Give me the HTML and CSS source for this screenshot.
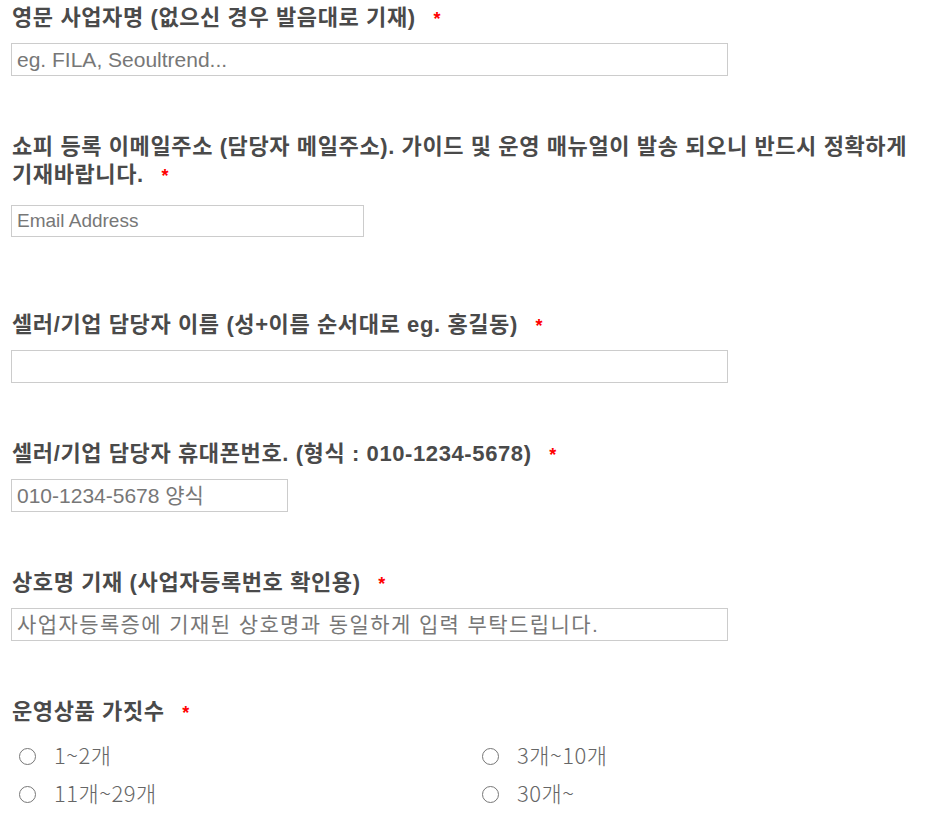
FILE: index.html
```html
<!DOCTYPE html>
<html lang="ko">
<head>
<meta charset="UTF-8">
<meta name="viewport" content="width=device-width, initial-scale=1.0">
<title>셀러 등록</title>
<link rel="stylesheet" href="styles.css">
</head>
<body>
    <form class="form">
        <div class="field">
            <label class="field-label">영문 사업자명 (없으신 경우 발음대로 기재) <span class="req">*</span></label>
            <input class="input input-full" type="text" placeholder="eg. FILA, Seoultrend...">
        </div>

        <div class="field field-gap">
            <label class="field-label field-label-wrap">쇼피 등록 이메일주소 (담당자 메일주소). 가이드 및 운영 매뉴얼이 발송 되오니 반드시 정확하게 기재바랍니다. <span class="req">*</span></label>
            <input class="input input-email" type="email" placeholder="Email Address">
        </div>

        <div class="field">
            <label class="field-label">셀러/기업 담당자 이름 (성+이름 순서대로 eg. 홍길동) <span class="req">*</span></label>
            <input class="input input-full" type="text">
        </div>

        <div class="field">
            <label class="field-label">셀러/기업 담당자 휴대폰번호. (형식 : 010-1234-5678) <span class="req">*</span></label>
            <input class="input input-phone" type="text" placeholder="010-1234-5678 양식">
        </div>

        <div class="field">
            <label class="field-label">상호명 기재 (사업자등록번호 확인용) <span class="req">*</span></label>
            <input class="input input-full input-ko" type="text" placeholder="사업자등록증에 기재된 상호명과 동일하게 입력 부탁드립니다.">
        </div>

        <div class="field">
            <label class="field-label">운영상품 가짓수 <span class="req">*</span></label>
            <div class="radio-list">
                <label class="radio"><input type="radio" name="count"><span>1~2개</span></label>
                <label class="radio"><input type="radio" name="count"><span>3개~10개</span></label>
                <label class="radio"><input type="radio" name="count"><span>11개~29개</span></label>
                <label class="radio"><input type="radio" name="count"><span>30개~</span></label>
            </div>
        </div>
    </form>
</body>
</html>
```

FILE: styles.css
```css
body {
    margin: 0;
    padding: 4px 11px 0;
    background: #fff;
    font-family: "Liberation Sans", "Noto Sans CJK KR", sans-serif;
    color: #4a4a4a;
}
.field {
    margin-bottom: 57px;
}
.field-gap {
    margin-bottom: 74px;
}
.field-label {
    display: block;
    font-size: 22px;
    font-weight: 700;
    line-height: 28px;
    letter-spacing: 0.6px;
    margin-bottom: 11px;
    padding-left: 1px;
}
.field-label-wrap {
    margin-bottom: 16px;
}
.req {
    display: inline-block;
    color: #f00;
    font-size: 18px;
    line-height: 1;
    margin-left: 11px;
}
.input {
    display: block;
    box-sizing: border-box;
    height: 33px;
    margin: 0;
    padding: 0 5px;
    border: 1px solid #ccc;
    border-radius: 0;
    font-family: "Liberation Sans", "Noto Sans CJK KR", sans-serif;
    font-size: 21px;
    color: #333;
    background: #fff;
}
.input::placeholder {
    color: #777;
}
.input-full {
    width: 717px;
}
.input-email {
    width: 353px;
    height: 32px;
    font-size: 19px;
}
.input-phone {
    width: 277px;
}
.input-ko {
    letter-spacing: 1.4px;
}
.radio-list {
    display: grid;
    grid-template-columns: 463px 1fr;
    padding-left: 8px;
    margin-top: 7px;
    row-gap: 4px;
}
.radio {
    display: flex;
    align-items: center;
    height: 34px;
    line-height: 34px;
    font-family: "Noto Sans CJK KR", sans-serif;
    font-weight: 300;
    font-size: 22px;
    letter-spacing: 0.5px;
    color: #666;
}
.radio input {
    appearance: none;
    flex: none;
    width: 17px;
    height: 17px;
    margin: 4px 18px 0 0;
    border: 1.5px solid #777;
    border-radius: 50%;
    box-sizing: border-box;
}
```
